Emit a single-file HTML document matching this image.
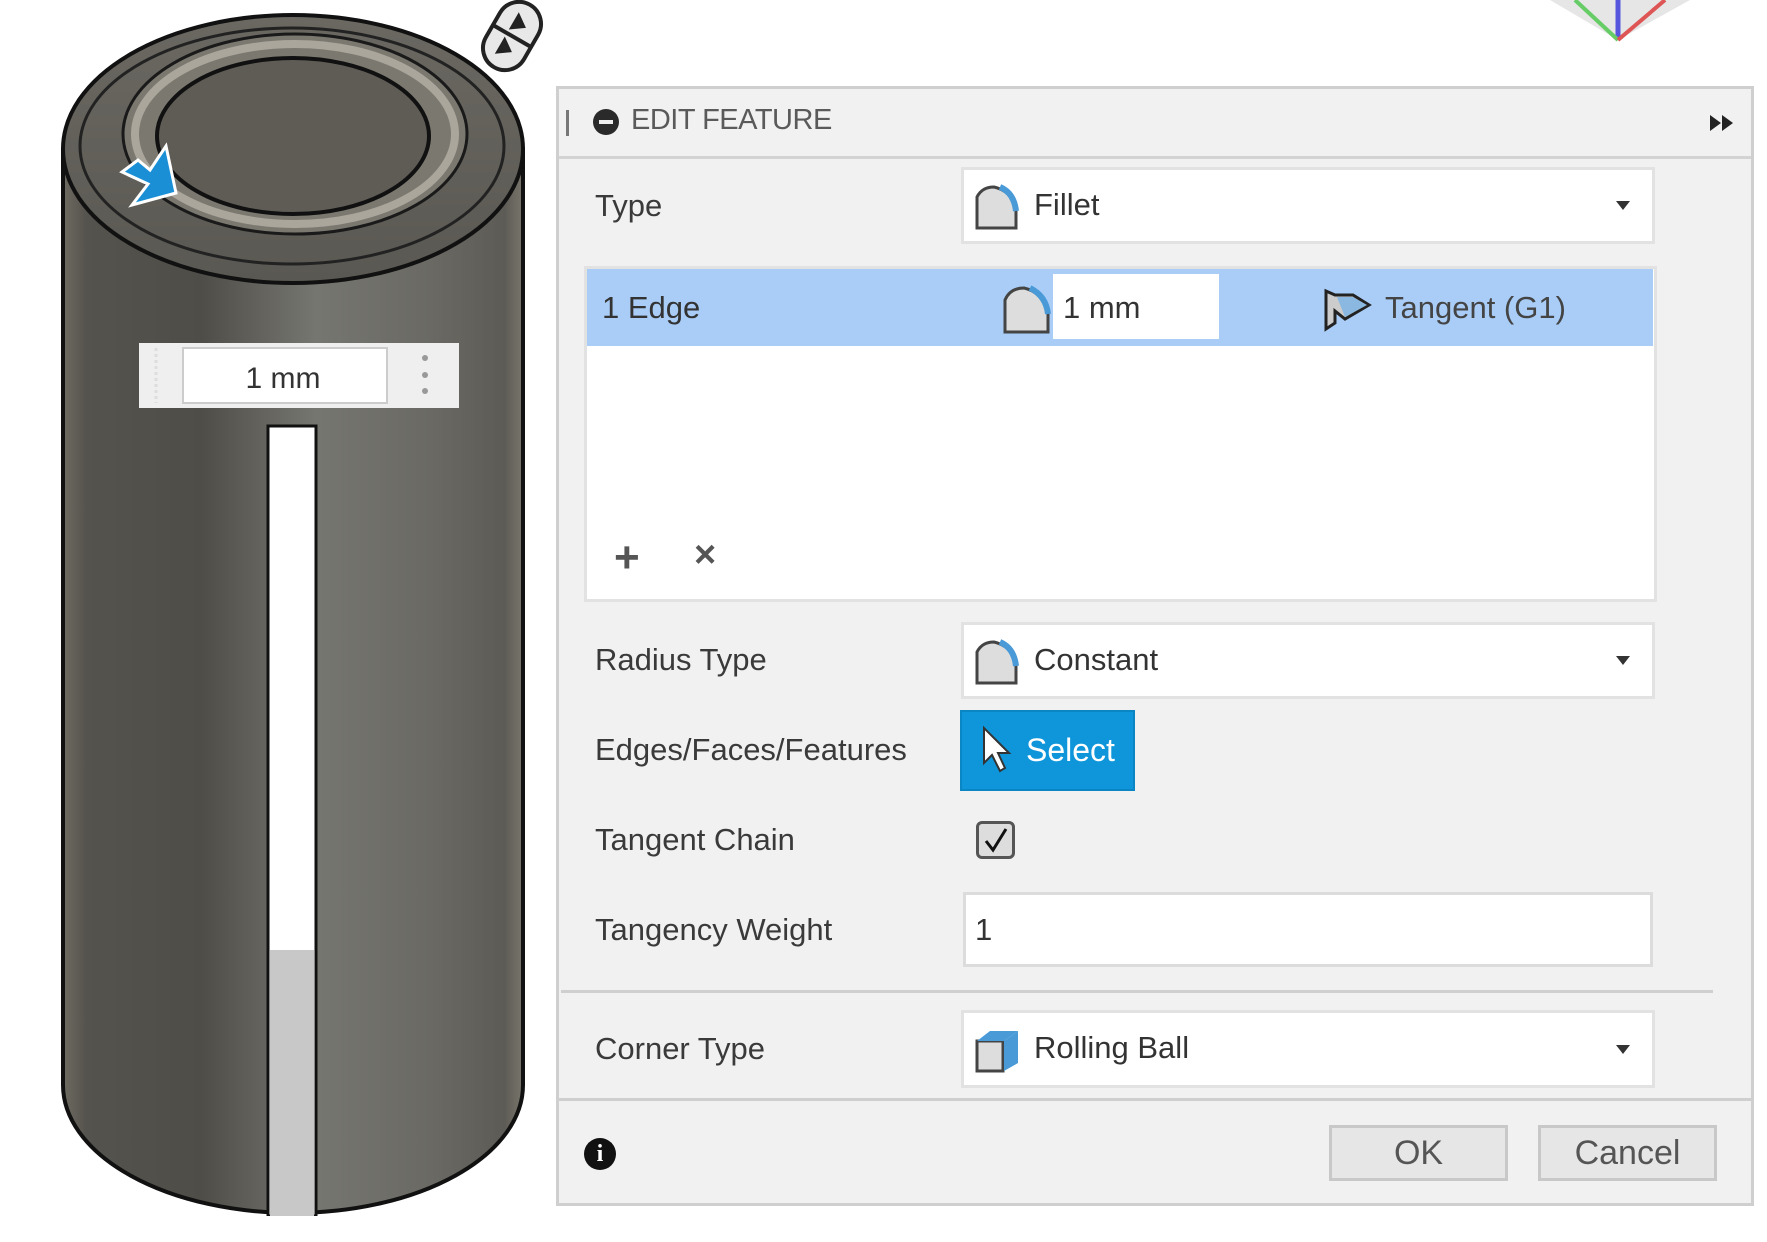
<!DOCTYPE html>
<html><head><meta charset="utf-8"><style>
*{margin:0;padding:0;box-sizing:border-box}
body{width:1767px;height:1242px;background:#fff;position:relative;overflow:hidden;font-family:"Liberation Sans",sans-serif;color:#333}
.a{position:absolute}
.lbl{position:absolute;left:595px;font-size:31px;color:#3a3a3a;line-height:34px}
.dd{position:absolute;left:961px;width:694px;background:#fff;border:3px solid #e2e2e2}
.dd .t{position:absolute;left:70px;font-size:31px;color:#333}
.dd .arr{position:absolute;right:22px;width:0;height:0;border-left:7px solid transparent;border-right:7px solid transparent;border-top:9px solid #333}
.btn{position:absolute;background:#e6e6e6;border:3px solid #c8c8c8;font-size:34px;color:#555;text-align:center}
</style></head><body>

<svg class="a" style="left:0;top:0" width="560" height="1242">
<defs>
<linearGradient id="body" x1="0" x2="1" y1="0" y2="0">
<stop offset="0" stop-color="#6e6b62"/><stop offset="0.05" stop-color="#55534d"/><stop offset="0.3" stop-color="#4f4d48"/><stop offset="0.55" stop-color="#767670"/><stop offset="0.8" stop-color="#6a6963"/><stop offset="0.96" stop-color="#5d5b55"/><stop offset="1" stop-color="#78766b"/>
</linearGradient>
<linearGradient id="top" x1="0" x2="0" y1="0" y2="1"><stop offset="0" stop-color="#6a6861"/><stop offset="1" stop-color="#5a5852"/></linearGradient>
</defs>
<path d="M63 149 L63 1085 A230 128 0 0 0 523 1085 L523 149 Z" fill="url(#body)" stroke="#111" stroke-width="4"/>
<ellipse cx="293" cy="149" rx="230" ry="134" fill="url(#top)" stroke="#111" stroke-width="4"/>
<ellipse cx="292" cy="146" rx="212" ry="118" fill="none" stroke="#222" stroke-width="3"/>
<ellipse cx="295" cy="134" rx="172" ry="100" fill="#7b7870" stroke="#1a1a1a" stroke-width="3"/>
<ellipse cx="295" cy="134" rx="160" ry="90" fill="none" stroke="#aaa69c" stroke-width="8"/>
<ellipse cx="293" cy="136" rx="136" ry="78" fill="#5f5c56" stroke="#111" stroke-width="4"/>
<rect x="268" y="426" width="48" height="790" fill="#fff" stroke="#111" stroke-width="3"/>
<rect x="270" y="950" width="44" height="270" fill="#c8c8c8"/>
<rect x="0" y="1216" width="560" height="30" fill="#fff"/>
<path d="M122 172 L138 160 L150 170 L166 146 L176 193 L132 205 L148 184 Z" fill="#1a8fd6" stroke="#fff" stroke-width="3"/>
<rect x="139" y="343" width="320" height="65" fill="#efefef"/>
<rect x="183" y="348" width="204" height="55" fill="#fff" stroke="#ccc" stroke-width="2"/>
<text x="283" y="388" font-size="30" text-anchor="middle" fill="#333" font-family="Liberation Sans">1 mm</text>
<circle cx="425" cy="358" r="3" fill="#999"/><circle cx="425" cy="375" r="3" fill="#999"/><circle cx="425" cy="391" r="3" fill="#999"/>
<line x1="156" y1="348" x2="156" y2="403" stroke="#ddd" stroke-width="3" stroke-dasharray="3 3"/>
<g transform="translate(512 36) rotate(30)"><rect x="-22" y="-36" width="44" height="72" rx="22" fill="#e8e8e8" stroke="#222" stroke-width="4"/><line x1="-22" y1="0" x2="22" y2="0" stroke="#222" stroke-width="4"/><path d="M-6 -24 L8 -14 L-6 -4Z M-6 4 L8 14 L-6 24Z" fill="#222"/></g>
</svg>

<svg class="a" style="left:1520px;top:0" width="200" height="60">
<path d="M30 0 L98 40 L170 0 Z" fill="#e6e6e6"/>
<line x1="98" y1="0" x2="98" y2="40" stroke="#5555dd" stroke-width="5"/>
<line x1="55" y1="0" x2="98" y2="40" stroke="#66cc66" stroke-width="4"/>
<line x1="145" y1="0" x2="98" y2="40" stroke="#dd5555" stroke-width="4"/>
</svg>

<div class="a" style="left:556px;top:86px;width:1198px;height:1120px;background:#f1f1f1;border:3px solid #cfcfcf"></div>
<div class="a" style="left:559px;top:156px;width:1192px;height:3px;background:#d3d3d3"></div>
<div class="a" style="left:566px;top:110px;width:3px;height:26px;background:#777"></div>
<div class="a" style="left:593px;top:109px;width:26px;height:26px;border-radius:50%;background:#2a2a2a"></div>
<div class="a" style="left:599px;top:120px;width:14px;height:4px;background:#eee"></div>
<div class="a" style="left:631px;top:104px;font-size:29px;color:#5a5a5a;letter-spacing:-0.5px">EDIT FEATURE</div>
<div class="a" style="left:1710px;top:115px;width:0;height:0;border-top:8px solid transparent;border-bottom:8px solid transparent;border-left:11px solid #222"></div>
<div class="a" style="left:1722px;top:115px;width:0;height:0;border-top:8px solid transparent;border-bottom:8px solid transparent;border-left:11px solid #222"></div>

<div class="lbl" style="top:189px">Type</div>
<div class="dd" style="top:167px;height:77px">
<svg class="a" style="left:10px;top:13px" width="50" height="50"><path d="M3 45 L3 14 Q8 4 20 4 Q38 8 42 26 L42 45 Z" fill="#ddd" stroke="#444" stroke-width="3"/><path d="M26 4 Q40 10 42 28" fill="none" stroke="#4a9ad8" stroke-width="6"/></svg>
<div class="t" style="top:17px">Fillet</div><div class="arr" style="top:31px"></div></div>

<div class="a" style="left:584px;top:266px;width:1073px;height:336px;background:#fff;border:3px solid #e2e2e2"></div>
<div class="a" style="left:587px;top:269px;width:1066px;height:77px;background:#a9cdf7"></div>
<div class="a" style="left:602px;top:290px;font-size:31px;color:#333">1 Edge</div>
<svg class="a" style="left:1002px;top:284px" width="52" height="52"><path d="M3 48 L3 16 Q8 4 22 4 Q40 8 46 28 L46 48 Z" fill="#ddd" stroke="#444" stroke-width="3"/><path d="M28 4 Q44 12 46 30" fill="none" stroke="#4a9ad8" stroke-width="6"/></svg>
<div class="a" style="left:1053px;top:274px;width:166px;height:65px;background:#fff"></div>
<div class="a" style="left:1063px;top:290px;font-size:31px;color:#333">1 mm</div>
<svg class="a" style="left:1323px;top:283px" width="50" height="50"><path d="M3 8 L3 46 L12 40 L12 28 L22 36 L46 22 L30 12 L12 12 Z" fill="#ccc" stroke="#222" stroke-width="3"/><path d="M14 14 L30 14 L44 22 L22 34 Z" fill="#8ab8e0"/></svg>
<div class="a" style="left:1385px;top:290px;font-size:31px;color:#444">Tangent (G1)</div>
<div class="a" style="left:614px;top:533px;font-size:44px;font-weight:bold;color:#555">+</div>
<div class="a" style="left:694px;top:534px;font-size:38px;font-weight:bold;color:#555">×</div>

<div class="lbl" style="top:643px">Radius Type</div>
<div class="dd" style="top:622px;height:77px">
<svg class="a" style="left:10px;top:13px" width="50" height="50"><path d="M3 45 L3 14 Q8 4 20 4 Q38 8 42 26 L42 45 Z" fill="#ddd" stroke="#444" stroke-width="3"/><path d="M26 4 Q40 10 42 28" fill="none" stroke="#4a9ad8" stroke-width="6"/></svg>
<div class="t" style="top:17px">Constant</div><div class="arr" style="top:31px"></div></div>

<div class="lbl" style="top:733px">Edges/Faces/Features</div>
<div class="a" style="left:960px;top:710px;width:175px;height:81px;background:#0f96da;border:2px solid #0a86c4"></div>
<svg class="a" style="left:980px;top:725px" width="32" height="52"><path d="M4 3 L4 38 L12 30 L20 46 L25 43 L18 28 L29 28 Z" fill="#fff" stroke="#333" stroke-width="2"/></svg>
<div class="a" style="left:1026px;top:732px;font-size:32px;color:#fff">Select</div>

<div class="lbl" style="top:823px">Tangent Chain</div>
<div class="a" style="left:976px;top:821px;width:39px;height:38px;border:3px solid #555;border-radius:6px;background:#ddd"></div>
<svg class="a" style="left:980px;top:825px" width="32" height="32"><path d="M6 16 L13 25 L26 4" fill="none" stroke="#111" stroke-width="3"/></svg>

<div class="lbl" style="top:913px">Tangency Weight</div>
<div class="a" style="left:963px;top:892px;width:690px;height:75px;background:#fff;border:3px solid #dcdcdc"></div>
<div class="a" style="left:975px;top:912px;font-size:31px;color:#333">1</div>

<div class="a" style="left:561px;top:990px;width:1152px;height:3px;background:#cfcfcf"></div>

<div class="lbl" style="top:1032px">Corner Type</div>
<div class="dd" style="top:1010px;height:78px">
<svg class="a" style="left:10px;top:12px" width="50" height="52"><rect x="3" y="16" width="26" height="30" fill="#ddd" stroke="#444" stroke-width="3"/><path d="M3 16 L16 6 L44 6 L30 16 Z" fill="#4a9ad8"/><path d="M30 16 L44 6 L44 38 L30 46 Z" fill="#4a9ad8"/></svg>
<div class="t" style="top:17px">Rolling Ball</div><div class="arr" style="top:32px"></div></div>

<div class="a" style="left:559px;top:1098px;width:1192px;height:3px;background:#cfcfcf"></div>
<div class="a" style="left:584px;top:1138px;width:32px;height:32px;border-radius:50%;background:#111;color:#fff;font-weight:bold;font-size:24px;text-align:center;line-height:32px;font-family:'Liberation Serif',serif">i</div>
<div class="btn" style="left:1329px;top:1125px;width:179px;height:56px;line-height:50px">OK</div>
<div class="btn" style="left:1538px;top:1125px;width:179px;height:56px;line-height:50px">Cancel</div>
</body></html>
